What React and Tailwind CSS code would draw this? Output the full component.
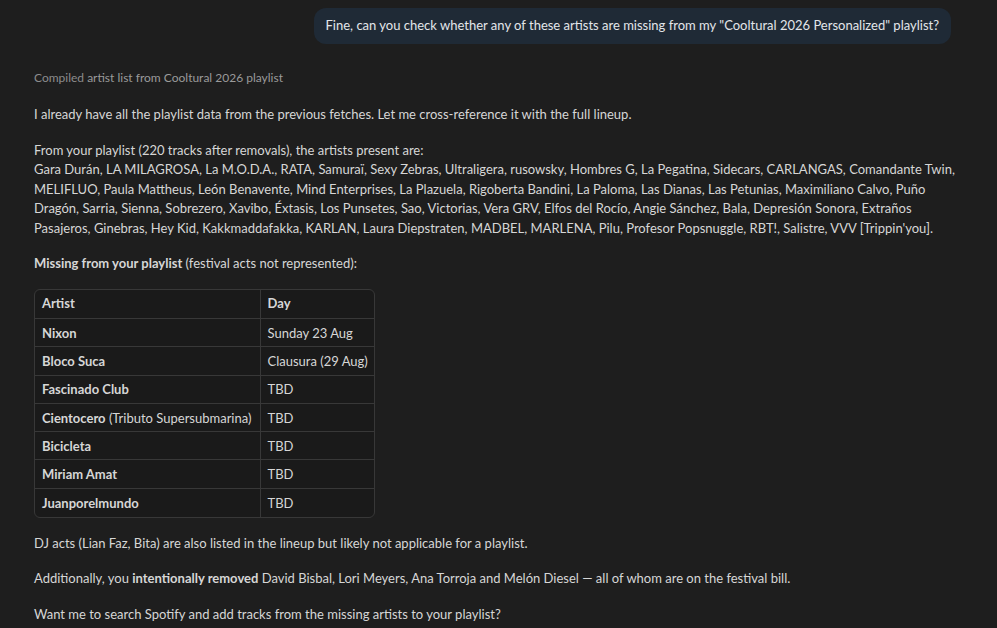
import React from 'react';

const artists = [
  'Gara Durán, LA MILAGROSA, La M.O.D.A., RATA, Samuraï, Sexy Zebras, Ultraligera, rusowsky, Hombres G, La Pegatina, Sidecars, CARLANGAS, Comandante Twin,',
  'MELIFLUO, Paula Mattheus, León Benavente, Mind Enterprises, La Plazuela, Rigoberta Bandini, La Paloma, Las Dianas, Las Petunias, Maximiliano Calvo, Puño',
  'Dragón, Sarria, Sienna, Sobrezero, Xavibo, Éxtasis, Los Punsetes, Sao, Victorias, Vera GRV, Elfos del Rocío, Angie Sánchez, Bala, Depresión Sonora, Extraños',
  "Pasajeros, Ginebras, Hey Kid, Kakkmaddafakka, KARLAN, Laura Diepstraten, MADBEL, MARLENA, Pilu, Profesor Popsnuggle, RBT!, Salistre, VVV [Trippin'you].",
];

const missing = [
  { name: 'Nixon', day: 'Sunday 23 Aug' },
  { name: 'Bloco Suca', day: 'Clausura (29 Aug)' },
  { name: 'Fascinado Club', day: 'TBD' },
  { name: 'Cientocero', note: '(Tributo Supersubmarina)', day: 'TBD' },
  { name: 'Bicicleta', day: 'TBD' },
  { name: 'Miriam Amat', day: 'TBD' },
  { name: 'Juanporelmundo', day: 'TBD' },
];

function MissingTable() {
  return (
    <div className="w-[341px] overflow-hidden rounded-md border border-[#383838] bg-[#1a1a1a]">
      <table className="w-full table-fixed border-collapse text-left">
        <colgroup>
          <col className="w-[225px]" />
          <col />
        </colgroup>
        <thead>
          <tr className="h-[29px]">
            <th className="border-b border-r border-[#383838] px-[7px] font-bold">Artist</th>
            <th className="border-b border-[#383838] px-[7px] font-bold">Day</th>
          </tr>
        </thead>
        <tbody>
          {missing.map((row, i) => (
            <tr key={row.name} className="h-[28.3px]">
              <td className={`border-r border-[#383838] px-[7px] pt-[2px] whitespace-nowrap ${i < missing.length - 1 ? 'border-b' : ''}`}>
                <span className="font-bold">{row.name}</span>
                {row.note && <span> {row.note}</span>}
              </td>
              <td className={`border-[#383838] px-[7px] pt-[2px] whitespace-nowrap ${i < missing.length - 1 ? 'border-b' : ''}`}>{row.day}</td>
            </tr>
          ))}
        </tbody>
      </table>
    </div>
  );
}

export default function App() {
  return (
    <div
      className="min-h-screen bg-[#1e1e1e] text-[#d6d6d6] text-[13px] leading-[19.5px]"
      style={{ fontFamily: '"Segoe UI", Lato, sans-serif' }}
    >
      {/* user message */}
      <div className="flex justify-end pt-[8px] pr-[46px]">
        <div className="rounded-[12px] bg-[#1f2a36] px-[12px] py-[8px] text-[#e3e6ea]">
          Fine, can you check whether any of these artists are missing from my "Cooltural 2026 Personalized" playlist?
        </div>
      </div>

      {/* assistant reply */}
      <div className="px-[34px] pt-[24px]">
        <div className="text-[12px] text-[#8c8c8c]">
          Compiled <span className="text-[#9a9a9a]">artist list from Cooltural 2026 playlist</span>
        </div>

        <p className="mt-[18px]">I already have all the playlist data from the previous fetches. Let me cross-reference it with the full lineup.</p>

        <p className="mt-[16px] whitespace-nowrap">
          From your playlist (220 tracks after removals), the artists present are:
          {artists.map((line) => (
            <React.Fragment key={line}>
              <br />
              {line}
            </React.Fragment>
          ))}
        </p>

        <p className="mt-[16px]">
          <span className="font-bold">Missing from your playlist</span> (festival acts not represented):
        </p>

        <div className="mt-[15px]">
          <MissingTable />
        </div>

        <p className="mt-[16px]">DJ acts (Lian Faz, Bita) are also listed in the lineup but likely not applicable for a playlist.</p>

        <p className="mt-[16px]">
          Additionally, you <span className="font-bold">intentionally removed</span> David Bisbal, Lori Meyers, Ana Torroja and Melón Diesel — all of whom are on the festival bill.
        </p>

        <p className="mt-[16px]">Want me to search Spotify and add tracks from the missing artists to your playlist?</p>
      </div>
    </div>
  );
}
